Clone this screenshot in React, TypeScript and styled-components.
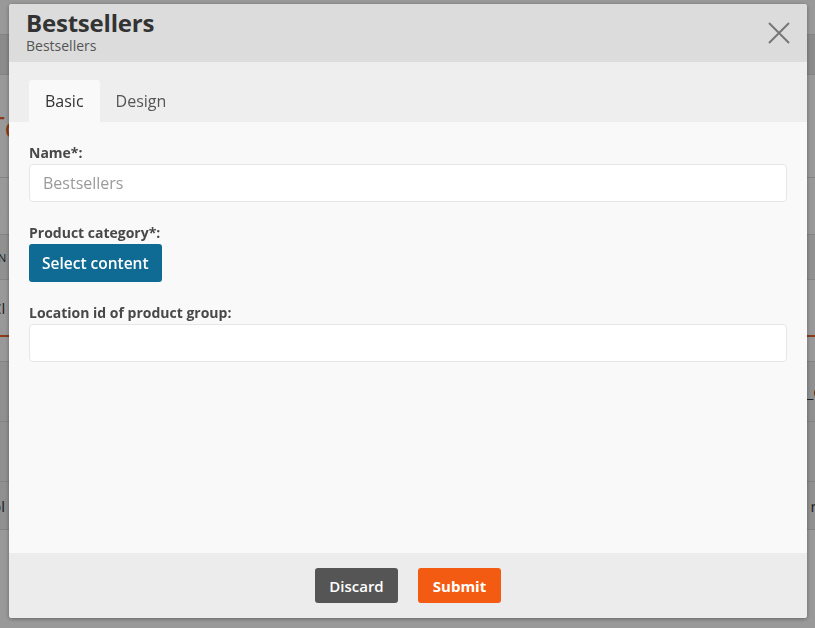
import React from 'react';
import styled, { createGlobalStyle } from 'styled-components';

const GlobalStyle = createGlobalStyle`
  html, body {
    margin: 0;
    padding: 0;
    height: 100%;
    overflow: hidden;
  }
  body {
    font-family: "Open Sans", "Liberation Sans", sans-serif;
    background: #ffffff;
  }
`;

/* page behind the dialog */

const BackPage = styled.div`
  display: flex;
  flex-direction: column;
  width: 815px;
  height: 628px;
  background: #ffffff;
  color: #333;
`;

const BackBand = styled.div<{ h: number; shade?: string; line?: string }>`
  height: ${(p) => p.h}px;
  background: ${(p) => p.shade || '#ffffff'};
  border-bottom: ${(p) => (p.line ? `2px solid ${p.line}` : '1px solid #dddddd')};
  display: flex;
  align-items: center;
  justify-content: space-between;
  font-size: 14px;
  box-sizing: border-box;
  overflow: hidden;
`;

const BackHeading = styled.span`
  font-size: 30px;
  color: #e8622c;
  margin-left: -12px;
`;

const BackCell = styled.span<{ small?: boolean }>`
  font-size: ${(p) => (p.small ? '11px' : '15px')};
  margin-left: -8px;
`;

const BackCellRight = styled.span`
  font-size: 15px;
  margin-right: -10px;
`;

const Overlay = styled.div`
  position: fixed;
  inset: 0;
  background: rgba(0, 0, 0, 0.4);
`;

/* dialog */

const Modal = styled.div`
  position: fixed;
  left: 9px;
  top: 4px;
  width: 798px;
  height: 614px;
  display: flex;
  flex-direction: column;
  background: #f9f9f9;
  border-radius: 3px;
  box-shadow: 0 1px 4px rgba(0, 0, 0, 0.35);
  overflow: hidden;
`;

const Header = styled.div`
  height: 58px;
  flex: none;
  background: #dcdcdc;
  display: flex;
  align-items: flex-start;
  justify-content: space-between;
  padding: 5px 17px 0 17px;
  box-sizing: border-box;
`;

const TitleBlock = styled.div`
  display: flex;
  flex-direction: column;
`;

const Title = styled.h1`
  margin: 0;
  font-size: 24px;
  line-height: 28px;
  font-weight: 700;
  color: #333333;
  letter-spacing: -0.2px;
`;

const SubTitle = styled.div`
  font-size: 14px;
  line-height: 18px;
  color: #555555;
`;

const CloseButton = styled.button`
  border: none;
  background: none;
  padding: 0;
  margin: 13px 0 0 0;
  width: 22px;
  height: 22px;
  cursor: pointer;
`;

const TabBar = styled.div`
  height: 60px;
  flex: none;
  background: #eeeeee;
  display: flex;
  align-items: flex-end;
  padding-left: 20px;
  box-sizing: border-box;
`;

const Tab = styled.div<{ active?: boolean }>`
  height: 42px;
  padding: 0 16px;
  display: flex;
  align-items: center;
  font-size: 16px;
  color: ${(p) => (p.active ? '#333333' : '#555555')};
  background: ${(p) => (p.active ? '#f9f9f9' : 'transparent')};
  border-radius: 3px 3px 0 0;
`;

const Body = styled.div`
  flex: 1;
  padding: 22px 20px 0 20px;
  display: flex;
  flex-direction: column;
  gap: 22px;
`;

const Field = styled.div`
  display: flex;
  flex-direction: column;
  align-items: flex-start;
  gap: 2px;
`;

const Label = styled.label`
  font-size: 14px;
  line-height: 18px;
  font-weight: 700;
  color: #484848;
`;

const Input = styled.input`
  width: 100%;
  height: 38px;
  box-sizing: border-box;
  border: 1px solid #e6e6e6;
  border-radius: 4px;
  background: #ffffff;
  padding: 0 13px;
  font-family: inherit;
  font-size: 16px;
  color: #333;
  outline: none;

  &::placeholder {
    color: #9a9a9a;
  }
`;

const Button = styled.button<{ tone: 'blue' | 'grey' | 'orange' }>`
  height: ${(p) => (p.tone === 'blue' ? '38px' : '35px')};
  min-width: ${(p) => (p.tone === 'blue' ? 'auto' : '83px')};
  padding: 0 ${(p) => (p.tone === 'blue' ? '13px' : '14px')};
  border: none;
  border-radius: 3px;
  font-family: inherit;
  font-size: ${(p) => (p.tone === 'blue' ? '15.5px' : '15px')};
  font-weight: ${(p) => (p.tone === 'orange' ? 700 : 600)};
  color: #ffffff;
  background: ${(p) =>
    p.tone === 'blue' ? '#0f6b93' : p.tone === 'grey' ? '#555555' : '#f45b12'};
  cursor: pointer;
`;

const Footer = styled.div`
  height: 65px;
  flex: none;
  background: #ececec;
  display: flex;
  align-items: center;
  justify-content: center;
  gap: 20px;
`;

const CloseIcon = () => (
  <svg width="22" height="22" viewBox="0 0 22 22">
    <path d="M1 1 L21 21 M21 1 L1 21" stroke="#777777" strokeWidth="2" fill="none" />
  </svg>
);

const App: React.FC = () => {
  return (
    <>
      <GlobalStyle />
      <BackPage>
        <BackBand h={35} />
        <BackBand h={40} shade="#e8e8e8" />
        <BackBand h={103}>
          <BackHeading>To</BackHeading>
        </BackBand>
        <BackBand h={57}>
          <BackCell>S</BackCell>
        </BackBand>
        <BackBand h={45} shade="#f2f2f2">
          <BackCell small>EN</BackCell>
        </BackBand>
        <BackBand h={57} line="#e8622c">
          <BackCell>Cl</BackCell>
        </BackBand>
        <BackBand h={25} />
        <BackBand h={60} shade="#f0f0f0">
          <span />
          <BackCellRight>_O</BackCellRight>
        </BackBand>
        <BackBand h={60} shade="#f0f0f0" />
        <BackBand h={48} shade="#f0f0f0">
          <BackCell>bl</BackCell>
          <BackCellRight>re</BackCellRight>
        </BackBand>
      </BackPage>
      <Overlay />
      <Modal>
        <Header>
          <TitleBlock>
            <Title>Bestsellers</Title>
            <SubTitle>Bestsellers</SubTitle>
          </TitleBlock>
          <CloseButton aria-label="Close">
            <CloseIcon />
          </CloseButton>
        </Header>
        <TabBar>
          <Tab active>Basic</Tab>
          <Tab>Design</Tab>
        </TabBar>
        <Body>
          <Field>
            <Label>Name*:</Label>
            <Input placeholder="Bestsellers" />
          </Field>
          <Field>
            <Label>Product category*:</Label>
            <Button tone="blue">Select content</Button>
          </Field>
          <Field>
            <Label>Location id of product group:</Label>
            <Input />
          </Field>
        </Body>
        <Footer>
          <Button tone="grey">Discard</Button>
          <Button tone="orange">Submit</Button>
        </Footer>
      </Modal>
    </>
  );
};

export default App;
